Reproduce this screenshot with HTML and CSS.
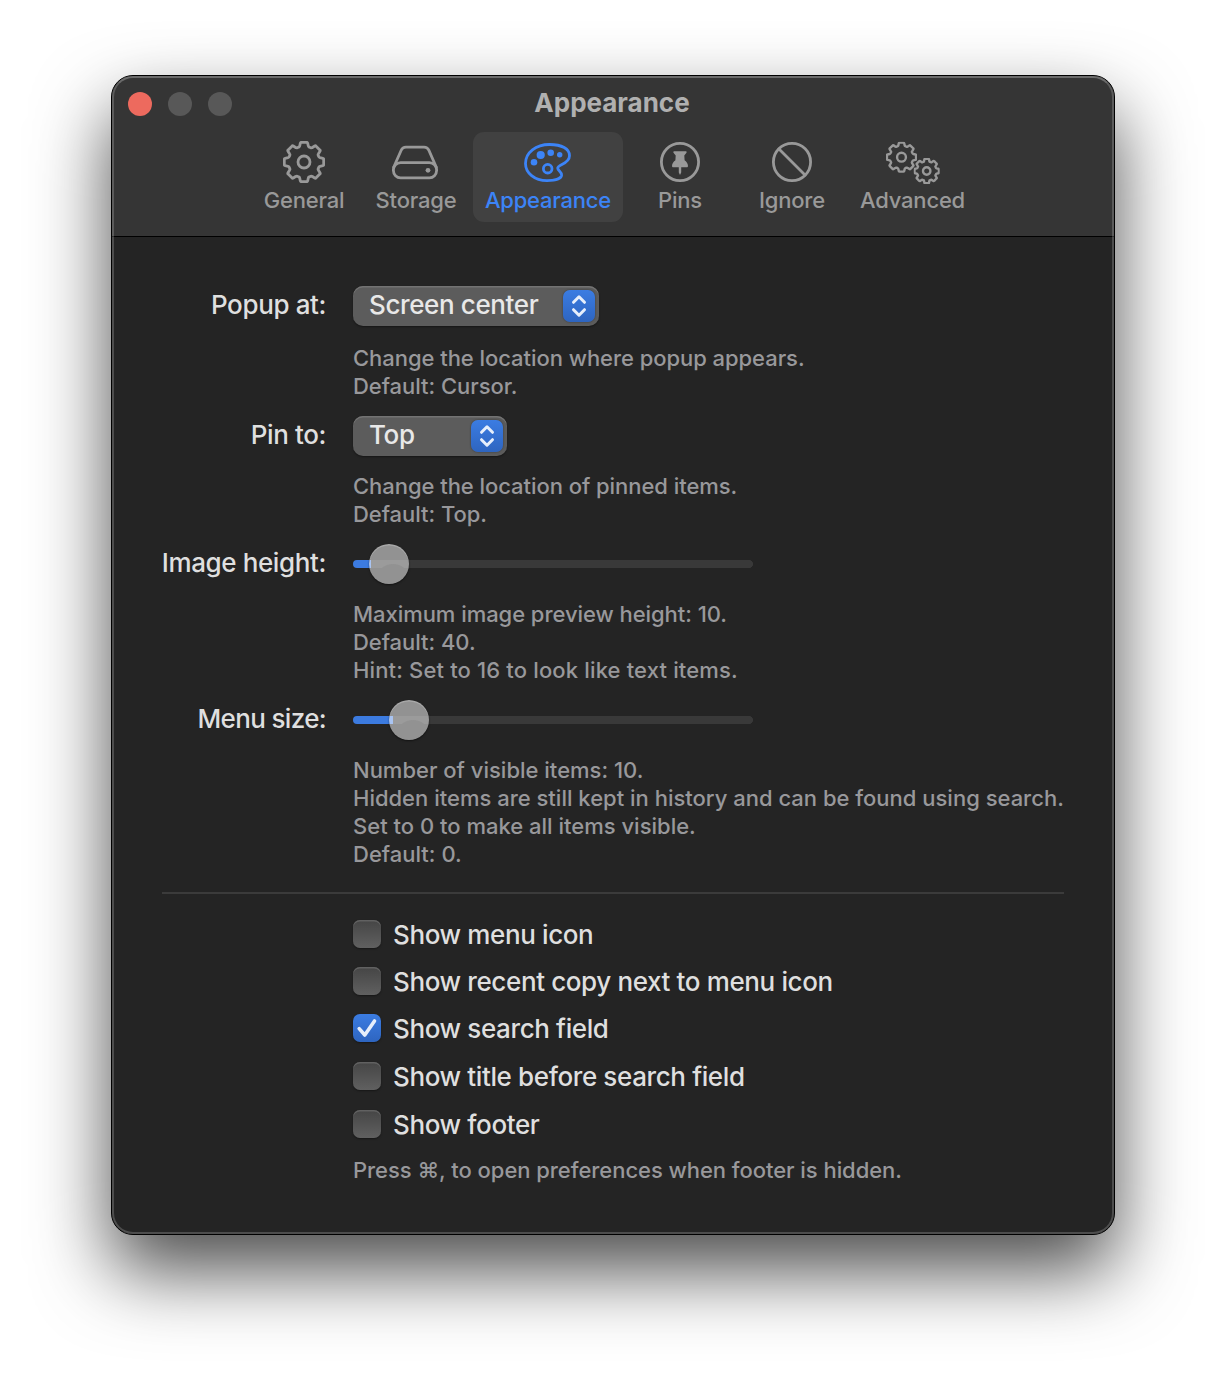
FILE: index.html
```html
<!DOCTYPE html>
<html lang="en">
<head>
<meta charset="utf-8">
<title>Appearance</title>
<link rel="stylesheet" href="styles.css">
</head>
<body>
<svg class="defs" aria-hidden="true">
  <symbol id="gear" viewBox="-21 -21 42 42">
    <path vector-effect="non-scaling-stroke" d="M-2.6-19.7H2.6Q3.5-19.7 3.7-18.8L4.3-16Q4.5-15.2 5.2-14.9L6.7-14.2Q7.4-13.9 8-14.3L10.7-16Q11.5-16.5 12.1-15.8L15.8-12.1Q16.5-11.5 16-10.7L14.3-8Q13.9-7.4 14.2-6.7L14.9-5.2Q15.2-4.5 16-4.3L18.8-3.7Q19.7-3.5 19.7-2.6V2.6Q19.7 3.5 18.8 3.7L16 4.3Q15.2 4.5 14.9 5.2L14.2 6.7Q13.9 7.4 14.3 8L16 10.7Q16.5 11.5 15.8 12.1L12.1 15.8Q11.5 16.5 10.7 16L8 14.3Q7.4 13.9 6.7 14.2L5.2 14.9Q4.5 15.2 4.3 16L3.7 18.8Q3.5 19.7 2.6 19.7H-2.6Q-3.5 19.7-3.7 18.8L-4.3 16Q-4.5 15.2-5.2 14.9L-6.7 14.2Q-7.4 13.9-8 14.3L-10.7 16Q-11.5 16.5-12.1 15.8L-15.8 12.1Q-16.5 11.5-16 10.7L-14.3 8Q-13.9 7.4-14.2 6.7L-14.9 5.2Q-15.2 4.5-16 4.3L-18.8 3.7Q-19.7 3.5-19.7 2.6V-2.6Q-19.7-3.5-18.8-3.7L-16-4.3Q-15.2-4.5-14.9-5.2L-14.2-6.7Q-13.9-7.4-14.3-8L-16-10.7Q-16.5-11.5-15.8-12.1L-12.1-15.8Q-11.5-16.5-10.7-16L-8-14.3Q-7.4-13.9-6.7-14.2L-5.2-14.9Q-4.5-15.2-4.3-16L-3.7-18.8Q-3.5-19.7-2.6-19.7Z"/>
    <circle vector-effect="non-scaling-stroke" r="6"/>
  </symbol>
  <symbol id="chevrons" viewBox="0 0 32 32">
    <path d="M10.500 12.300L16 6.800l5.500 5.500M10.500 19.700l5.500 5.500 5.500-5.500"/>
  </symbol>
</svg>

<main class="window">
  <header class="toolbar">
    <div class="titlebar">
      <div class="lights"><i class="light close"></i><i class="light"></i><i class="light"></i></div>
      <h1 class="title">Appearance</h1>
    </div>
    <nav class="tabs">
      <a class="tab">
        <svg class="icon" width="42" height="42"><use href="#gear"/></svg>
        <span>General</span>
      </a>
      <a class="tab">
        <svg class="icon" width="48" height="42" viewBox="1 0 48 42">
          <path d="M2.8 26L10.2 9.2Q11.6 6.1 15 6.1H33Q36.4 6.1 37.8 9.2L45.2 26"/>
          <rect x="2.4" y="21.6" width="43.2" height="15.2" rx="7.2"/>
          <circle class="solid" cx="37" cy="29.3" r="2.4"/>
        </svg>
        <span>Storage</span>
      </a>
      <a class="tab selected">
        <svg class="icon" width="48" height="42" viewBox="0 -2 48 42">
          <path d="M23 37.6C10.5 37.6 1.5 30 1.5 20.5C1.5 9.5 12 1.5 25.5 1.5C38 1.5 45.5 6 45.5 12.7C45.5 21 33.7 21.2 33.7 25C33.7 27.7 37.8 28.5 37.6 32.2C37.3 36 30 37.6 23 37.6Z"/>
          <g class="solid"><circle cx="16.7" cy="12" r="4.1"/><circle cx="26.7" cy="9.7" r="3.3"/><circle cx="35.7" cy="11.7" r="2.7"/><circle cx="10" cy="19.3" r="3.3"/></g>
          <circle cx="23.7" cy="25.7" r="4.3"/>
        </svg>
        <span>Appearance</span>
      </a>
      <a class="tab">
        <svg class="icon" width="40" height="42" viewBox="0 -1 40 42">
          <circle cx="20" cy="20" r="18.6"/>
          <path class="solid" d="M14 9.3h12c.8 0 .8 1.2.3 1.8l-2 2.4.3 4.8c2.2 1.5 3.4 3.7 3.4 5.7 0 .9-.6 1.3-1.3 1.3h-5.5v5.2l-1.2 2.5-1.2-2.5v-5.2h-5.5c-.7 0-1.3-.4-1.3-1.3 0-2 1.2-4.2 3.4-5.7l.3-4.8-2-2.4c-.5-.6-.5-1.8.3-1.8z"/>
        </svg>
        <span>Pins</span>
      </a>
      <a class="tab">
        <svg class="icon" width="40" height="42" viewBox="0 -1 40 42">
          <circle cx="20" cy="20" r="18.6"/>
          <path d="M7 7L33 33"/>
        </svg>
        <span>Ignore</span>
      </a>
      <a class="tab">
        <svg class="icon fine" width="56" height="44" viewBox="1 0 56 44">
          <use href="#gear" x="2" y="0.7" width="31" height="31"/>
          <use href="#gear" x="29.7" y="17" width="26" height="26"/>
        </svg>
        <span>Advanced</span>
      </a>
    </nav>
  </header>

  <section class="form">
    <span class="label">Popup at:</span>
    <div class="popup wide"><span>Screen center</span><svg class="stepper" width="32" height="32"><use href="#chevrons"/></svg></div>
    <p class="hint first">Change the location where popup appears.<br>Default: Cursor.</p>

    <span class="label">Pin to:</span>
    <div class="popup narrow"><span>Top</span><svg class="stepper" width="32" height="32"><use href="#chevrons"/></svg></div>
    <p class="hint">Change the location of pinned items.<br>Default: Top.</p>

    <span class="label">Image height:</span>
    <div class="slider image-height"><i class="fill"></i><i class="knob"></i></div>
    <p class="hint">Maximum image preview height: 10.<br>Default: 40.<br><span class="loose">Hint: Set to 16 to look like text items.</span></p>

    <span class="label tight">Menu size:</span>
    <div class="slider menu-size"><i class="fill"></i><i class="knob"></i></div>
    <p class="hint even">Number of visible items: 10.<br>Hidden items are still kept in history and can be found using search.<br>Set to 0 to make all items visible.<br>Default: 0.</p>
  </section>

  <hr class="divider">

  <section class="options">
    <label class="option"><i class="box"></i><span>Show menu icon</span></label>
    <label class="option"><i class="box"></i><span>Show recent copy next to menu icon</span></label>
    <label class="option"><svg class="box checked" width="28" height="28" viewBox="0 0 28 28"><path d="M6.2 14.6L11.8 21 21.5 7"/></svg><span>Show search field</span></label>
    <label class="option"><i class="box"></i><span>Show title before search field</span></label>
    <label class="option"><i class="box"></i><span>Show footer</span></label>
    <p class="hint">Press ⌘, to open preferences when footer is hidden.</p>
  </section>
</main>
</body>
</html>
```
FILE: styles.css
```css
* { box-sizing: border-box; }

body {
  margin: 0;
  height: 1382px;
  padding: 75px 0 0 111px;
  background: #fff;
  overflow: hidden;
  font-family: Inter, "Liberation Sans", sans-serif;
  font-size: 26px;
  font-weight: 450;
  letter-spacing: -0.38px;
  color: #dfdfdf;
}

.defs { position: absolute; width: 0; height: 0; }

.window {
  position: relative;
  width: 1004px;
  height: 1160px;
  border: 1px solid #000;
  border-radius: 22px;
  background: #242424;
  box-shadow: 0 36px 76px rgba(0, 0, 0, 0.7);
}

/* Light rim drawn over the toolbar and content edges. */
.window::after {
  content: "";
  position: absolute;
  inset: 0;
  border-radius: 21px;
  border: 2px solid rgba(255, 255, 255, 0.19);
  border-top-color: rgba(255, 255, 255, 0.27);
  pointer-events: none;
}

.toolbar {
  height: 161px;
  border-radius: 21px 21px 0 0;
  background: #353535;
  border-bottom: 1px solid #000;
}

.titlebar {
  display: grid;
  grid-template-columns: 192px 1fr 210px;
  align-items: center;
  height: 56px;
  padding-left: 16px;
}

.lights { display: flex; gap: 16px; }
.light { width: 24px; height: 24px; border-radius: 50%; background: #585858; }
.close { background: #ed6a5e; }

.title {
  margin: 0;
  padding-bottom: 2px;
  text-align: center;
  font-size: 26px;
  line-height: 32px;
  font-weight: 700;
  color: #b0b0b0;
  letter-spacing: 0;
}

.tabs {
  display: grid;
  grid-template-columns: 112px 112px 152px 112px 112px 129px;
  margin-left: 136px;
}

.tab {
  display: flex;
  flex-direction: column;
  align-items: center;
  height: 90px;
  margin: 0 1px;
  padding-top: 9px;
  border-radius: 11px;
  color: #999;
  font-size: 22px;
  line-height: 28px;
  letter-spacing: -0.2px;
}
.tab span { margin-top: 3px; }
.tab .fine { margin-bottom: -2px; }
.selected { background: #414141; color: #3c84f7; }

.icon {
  flex: none;
  fill: none;
  stroke: currentColor;
  stroke-width: 2.8;
  stroke-linejoin: round;
  stroke-linecap: round;
  overflow: visible;
}
.fine { stroke-width: 2.4; }
.solid { fill: currentColor; stroke: none; }

.form {
  display: grid;
  grid-template-columns: 164px 1fr;
  column-gap: 27px;
  row-gap: 16px;
  margin: 49px 0 0 50px;
}

.label {
  display: flex;
  justify-content: flex-end;
  height: 40px;
  line-height: 38px;
  white-space: nowrap;
}
.tight { letter-spacing: -0.65px; }

.hint {
  grid-column: 2;
  margin: 0;
  font-size: 22px;
  line-height: 28px;
  letter-spacing: -0.05px;
  color: #98989b;
  white-space: nowrap;
}
.first { margin-top: 2px; }
.even { letter-spacing: 0; }
.loose { letter-spacing: 0.15px; }

.popup {
  display: flex;
  justify-content: space-between;
  height: 40px;
  padding: 4px 4px 4px 16px;
  border-radius: 10px;
  background: #5c5c5c;
  box-shadow: inset 0 1.5px 0 #737373, 0 1px 2px rgba(0, 0, 0, 0.4);
  line-height: 30px;
  color: #e8e8e8;
}
.wide { width: 246px; }
.narrow { width: 154px; }

.stepper {
  border-radius: 7px;
  background: linear-gradient(#3b7ce2, #2e65c0);
  box-shadow: 0 0 2px rgba(0, 0, 0, 0.45);
  fill: none;
  stroke: #e6eefb;
  stroke-width: 3;
  stroke-linecap: round;
  stroke-linejoin: round;
}

.slider {
  display: flex;
  align-items: center;
  width: 400px;
  height: 40px;
  background: linear-gradient(#393939, #393939) center / 392px 8px no-repeat,
    radial-gradient(circle at 396px 20px, #393939 3.7px, transparent 4.2px);
}
.fill { height: 8px; border-radius: 4px 0 0 4px; background: #3c7be0; }
.knob {
  flex: none;
  width: 40px;
  height: 40px;
  border-radius: 50%;
  background:
    radial-gradient(circle at 24px 38px, #929292 17.5px, transparent 18.5px),
    linear-gradient(90deg, #a9c4f2 var(--lit), #9b9b9b 0) center / 40px 8px no-repeat,
    #929292;
  box-shadow: inset 0 1.5px 0 #a8a8a8, 0 1px 2px rgba(0, 0, 0, 0.5);
}
.image-height .fill { width: 18px; }
.image-height .knob { margin-left: -2px; --lit: 2px; }
.menu-size .fill { width: 40px; }
.menu-size .knob { margin-left: -4px; --lit: 4px; }

.divider {
  height: 2px;
  margin: 24px 50px 0;
  border: 0;
  background: #3b3b3b;
}

.options { margin: 26px 0 0 241px; }
.option { display: flex; gap: 12px; height: 47px; line-height: 30px; white-space: nowrap; }
.option:nth-child(n+3) { height: 48px; }
.box {
  flex: none;
  width: 28px;
  height: 28px;
  border-radius: 7px;
  background: linear-gradient(#454545, #606060);
  box-shadow: inset 0 1.5px 0 #616161, 0 1px 2px rgba(0, 0, 0, 0.4);
}
.checked {
  background: linear-gradient(#3b7ce2, #2e65c0);
  box-shadow: 0 1px 2px rgba(0, 0, 0, 0.4);
  fill: none;
  stroke: #e6eefb;
  stroke-width: 3.6;
  stroke-linecap: round;
  stroke-linejoin: round;
}
.options .hint { margin-top: -2px; }
```
